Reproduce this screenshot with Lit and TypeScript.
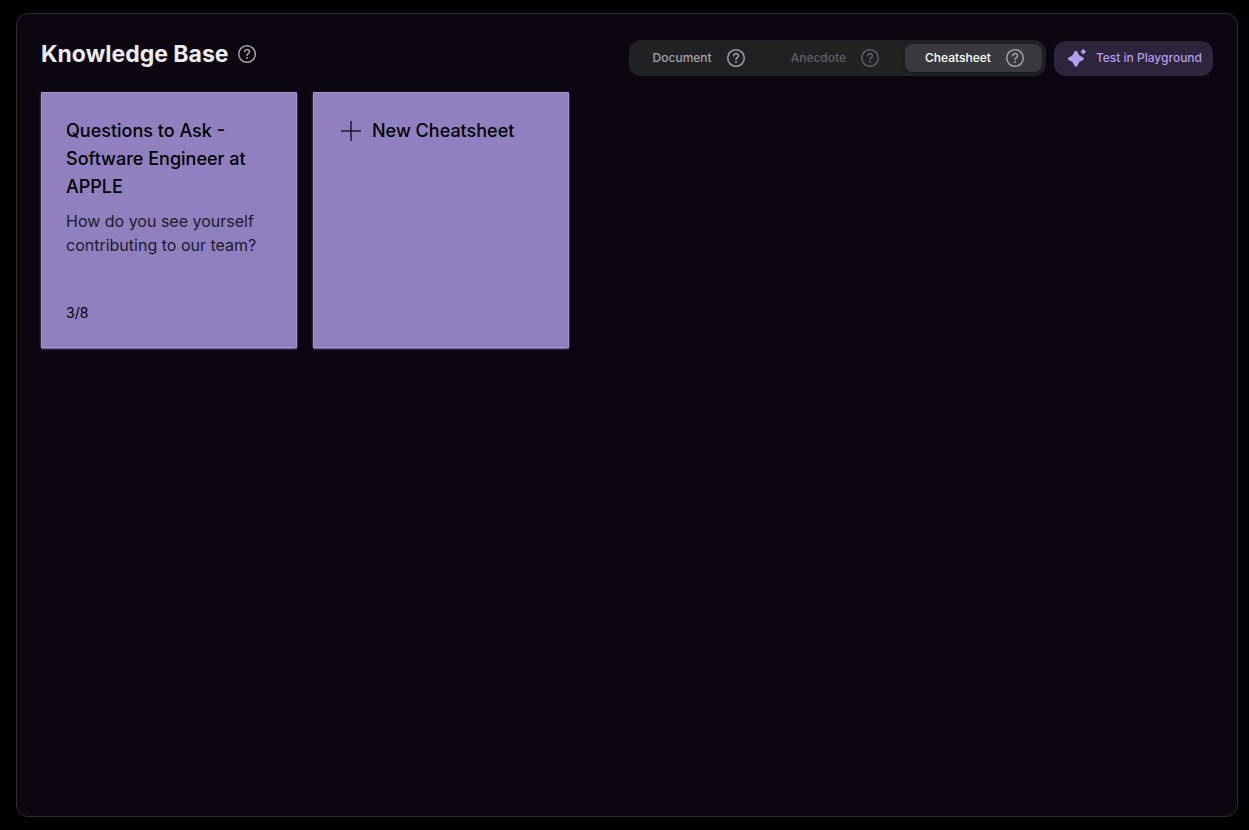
import { LitElement, css, html } from "lit";
import { customElement, property, state } from "lit/decorators.js";
import { classMap } from "lit/directives/class-map.js";

@customElement("help-icon")
class HelpIcon extends LitElement {
  static styles = css`
    :host {
      display: block;
      flex: none;
      width: 22px;
      height: 22px;
    }
    .glyph {
      display: block;
      width: 100%;
      height: 100%;
      fill: none;
      stroke: currentColor;
      stroke-width: 1.5;
      stroke-linecap: round;
      stroke-linejoin: round;
    }
    .dot {
      fill: currentColor;
      stroke: none;
    }
  `;

  render() {
    return html`<svg class="glyph" viewBox="0 0 22 22" aria-hidden="true">
      <circle cx="11" cy="11" r="8.3" />
      <path d="M8.6 8.7a2.45 2.2 0 1 1 3.9 1.8c-.8.55-1.5.9-1.5 1.9" />
      <circle class="dot" cx="11" cy="15" r="1" />
    </svg>`;
  }
}

@customElement("sheet-card")
class SheetCard extends LitElement {
  @property() heading = "";
  @property() question = "";
  @property() count = "";

  static styles = css`
    :host {
      display: block;
    }
    .card {
      box-sizing: border-box;
      display: flex;
      flex-direction: column;
      width: 100%;
      height: 100%;
      padding: 24px;
      border: 1px solid #a797d2;
      border-radius: 1px;
      background: #9080c0;
      box-shadow: 0 1px 2px #8a7abc;
      color: #000;
    }
    .heading {
      margin: 0 0 8px;
      font-size: 18px;
      line-height: 28px;
      font-weight: 500;
    }
    .question {
      margin: 0;
      font-size: 16px;
      line-height: 24px;
      color: #1b1b2a;
    }
    .count {
      margin: auto 0 0;
      font-size: 14px;
      line-height: 20px;
    }
  `;

  render() {
    return html`<article class="card">
      <h2 class="heading">${this.heading}</h2>
      <p class="question">${this.question}</p>
      <p class="count">${this.count}</p>
    </article>`;
  }
}

@customElement("app-root")
class AppRoot extends LitElement {
  @state() active = "Cheatsheet";

  tabs = [
    { name: "Document", muted: false },
    { name: "Anecdote", muted: true },
    { name: "Cheatsheet", muted: false },
  ];

  static styles = css`
    :host {
      box-sizing: border-box;
      display: flex;
      min-height: 100vh;
      padding: 13px 11px 13px 16px;
      background: #000;
      font-family: Inter, "Liberation Sans", sans-serif;
    }
    .panel {
      flex: 1;
      border: 1px solid #2e2b32;
      border-radius: 12px;
      padding: 24px;
      background: #0c0610;
    }
    .header {
      display: flex;
      justify-content: space-between;
      margin: 2px 0 16px;
    }
    .title-row {
      display: flex;
      align-items: center;
      gap: 8px;
      height: 28px;
      color: #a1a1aa;
    }
    .title {
      margin: 0;
      font-size: 23px;
      line-height: 28px;
      font-weight: 700;
      color: #ececef;
    }
    .actions {
      display: flex;
      align-items: center;
      gap: 8px;
    }
    .tabs {
      display: flex;
      gap: 8px;
      padding: 4px;
      border-radius: 12px;
      background: #222224;
    }
    .tab,
    .playground,
    .new-card {
      border: 0;
      font-family: inherit;
      cursor: pointer;
    }
    .tab {
      display: flex;
      align-items: center;
      gap: 13px;
      height: 28px;
      padding: 0 16px 0 20px;
      border-radius: 8px;
      background: none;
      color: #a1a1aa;
      font-size: 12px;
      line-height: 16px;
      font-weight: 500;
    }
    .tab.muted {
      color: #5f5f64;
    }
    .tab.active {
      background: #3a393f;
      box-shadow: 0 1px 4px #00000040;
    }
    .tab.active .tab-name {
      color: #fff;
    }
    .playground {
      display: flex;
      align-items: center;
      gap: 8px;
      height: 35px;
      padding: 0 11px 0 12px;
      border-radius: 12px;
      background: #2e243c;
      color: #b19eef;
      font-size: 12px;
      line-height: 16px;
      font-weight: 500;
    }
    .sparkle {
      width: 22px;
      height: 22px;
      fill: currentColor;
    }
    .cards {
      display: grid;
      grid-template-columns: repeat(auto-fill, 256px);
      grid-auto-rows: 256px;
      gap: 16px;
    }
    .new-card {
      display: flex;
      align-items: flex-start;
      gap: 8px;
      padding: 24px;
      border: 1px solid #a797d2;
      border-radius: 1px;
      background: #9080c0;
      box-shadow: 0 1px 2px #8a7abc;
      color: #000;
      font-size: 18px;
      line-height: 28px;
      font-weight: 500;
    }
    .plus {
      width: 26px;
      height: 28px;
      fill: none;
      stroke: #1b1b2a;
      stroke-width: 1.5;
    }
  `;

  render() {
    return html`<main class="panel">
      <header class="header">
        <div class="title-row">
          <h1 class="title">Knowledge Base</h1>
          <help-icon></help-icon>
        </div>
        <div class="actions">
          <nav class="tabs" role="tablist" aria-label="Knowledge type">
            ${this.tabs.map(
              (tab) => html`<button
                class=${classMap({
                  tab: true,
                  muted: tab.muted,
                  active: tab.name === this.active,
                })}
                role="tab"
                aria-selected=${tab.name === this.active}
                @click=${() => (this.active = tab.name)}
              >
                <span class="tab-name">${tab.name}</span>
                <help-icon></help-icon>
              </button>`
            )}
          </nav>
          <button class="playground">
            <svg class="sparkle" viewBox="0 0 22 22" aria-hidden="true">
              <path
                d="M8.6 4.6Q9.9 3 11.2 4.6L12.8 7.6Q13.2 8.5 14.2 9L17.2 10.6Q18.8 11.8 17.2 13L14.2 14.6Q13.2 15.1 12.8 16L11.2 19Q9.9 20.6 8.6 19L7 16Q6.6 15.1 5.6 14.6L2.6 13Q1 11.8 2.6 10.6L5.6 9Q6.6 8.5 7 7.6Z"
              />
              <path
                d="M16.7 2.3Q17.3 1.5 17.9 2.3L18.6 3.4L19.7 4.1Q20.5 4.7 19.7 5.3L18.6 6L17.9 7.1Q17.3 7.9 16.7 7.1L16 6L14.9 5.3Q14.1 4.7 14.9 4.1L16 3.4Z"
              />
            </svg>
            <span>Test in Playground</span>
          </button>
        </div>
      </header>
      <section class="cards">
        <sheet-card
          heading="Questions to Ask - Software Engineer at APPLE"
          question="How do you see yourself contributing to our team?"
          count="3/8"
        ></sheet-card>
        <button class="new-card">
          <svg class="plus" viewBox="0 0 26 28" aria-hidden="true">
            <path d="M13 4v20M3 14h20" />
          </svg>
          <span>New Cheatsheet</span>
        </button>
      </section>
    </main>`;
  }
}
